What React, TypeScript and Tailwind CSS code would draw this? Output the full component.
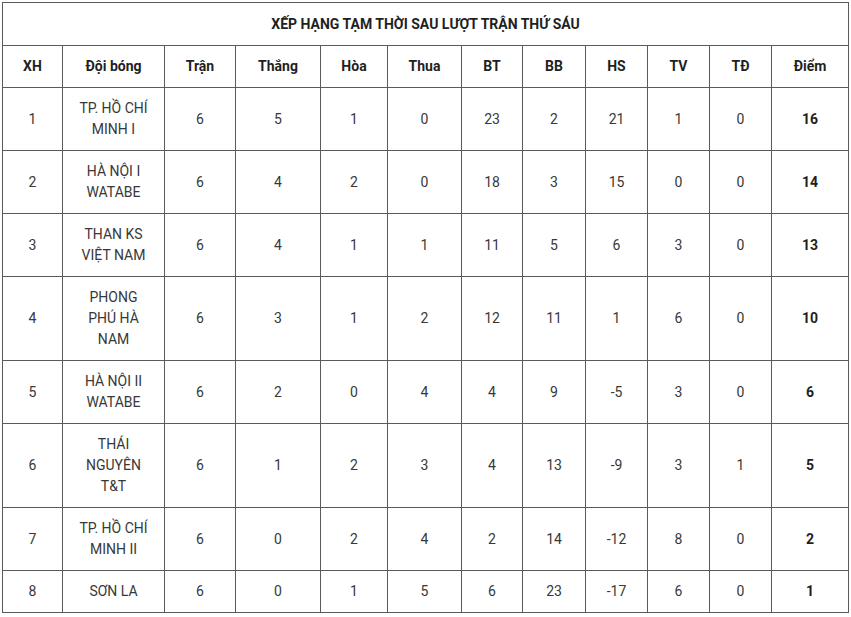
const cols = [60, 102, 71, 85, 67, 74, 61, 63, 62, 62, 62, 77];
const headers = ["XH", "Đội bóng", "Trận", "Thắng", "Hòa", "Thua", "BT", "BB", "HS", "TV", "TĐ", "Điểm"];

type Row = { team: string[]; stats: (string | number)[]; h: string };

const rows: Row[] = [
  { team: ["TP. HỒ CHÍ", "MINH I"], stats: [6, 5, 1, 0, 23, 2, 21, 1, 0, 16], h: "h-[63px]" },
  { team: ["HÀ NỘI I", "WATABE"], stats: [6, 4, 2, 0, 18, 3, 15, 0, 0, 14], h: "h-[63px]" },
  { team: ["THAN KS", "VIỆT NAM"], stats: [6, 4, 1, 1, 11, 5, 6, 3, 0, 13], h: "h-[63px]" },
  { team: ["PHONG", "PHÚ HÀ", "NAM"], stats: [6, 3, 1, 2, 12, 11, 1, 6, 0, 10], h: "h-[84px]" },
  { team: ["HÀ NỘI II", "WATABE"], stats: [6, 2, 0, 4, 4, 9, -5, 3, 0, 6], h: "h-[63px]" },
  { team: ["THÁI", "NGUYÊN", "T&T"], stats: [6, 1, 2, 3, 4, 13, -9, 3, 1, 5], h: "h-[84px]" },
  { team: ["TP. HỒ CHÍ", "MINH II"], stats: [6, 0, 2, 4, 2, 14, -12, 8, 0, 2], h: "h-[63px]" },
  { team: ["SƠN LA"], stats: [6, 0, 1, 5, 6, 23, -17, 6, 0, 1], h: "h-[42px]" },
];

const cell = "border border-[#5a5a5a] text-center align-middle p-0";

export default function App() {
  return (
    <div className="min-h-[617px] bg-white pt-[2px] pl-[2px] font-['Roboto',_'Liberation_Sans',_sans-serif] text-[14px] leading-[21px] text-[#383838]">
      <table className="table-fixed border-collapse w-[846px]">
        <colgroup>
          {cols.map((w, i) => (
            <col key={i} style={{ width: w }} />
          ))}
        </colgroup>
        <tbody>
          <tr className="h-[43px]">
            <td colSpan={12} className={`${cell} font-bold text-[#1f1f1f]`}>
              XẾP HẠNG TẠM THỜI SAU LƯỢT TRẬN THỨ SÁU
            </td>
          </tr>
          <tr className="h-[42px]">
            {headers.map((h) => (
              <td key={h} className={`${cell} font-bold text-[#1f1f1f]`}>
                {h}
              </td>
            ))}
          </tr>
          {rows.map((r, i) => (
            <tr key={i} className={r.h}>
              <td className={cell}>{i + 1}</td>
              <td className={cell}>
                {r.team.map((t, j) => (
                  <div key={j}>{t}</div>
                ))}
              </td>
              {r.stats.map((s, j) => (
                <td
                  key={j}
                  className={`${cell} ${j === r.stats.length - 1 ? "font-bold text-[#1f1f1f]" : ""}`}
                >
                  {s}
                </td>
              ))}
            </tr>
          ))}
        </tbody>
      </table>
    </div>
  );
}
